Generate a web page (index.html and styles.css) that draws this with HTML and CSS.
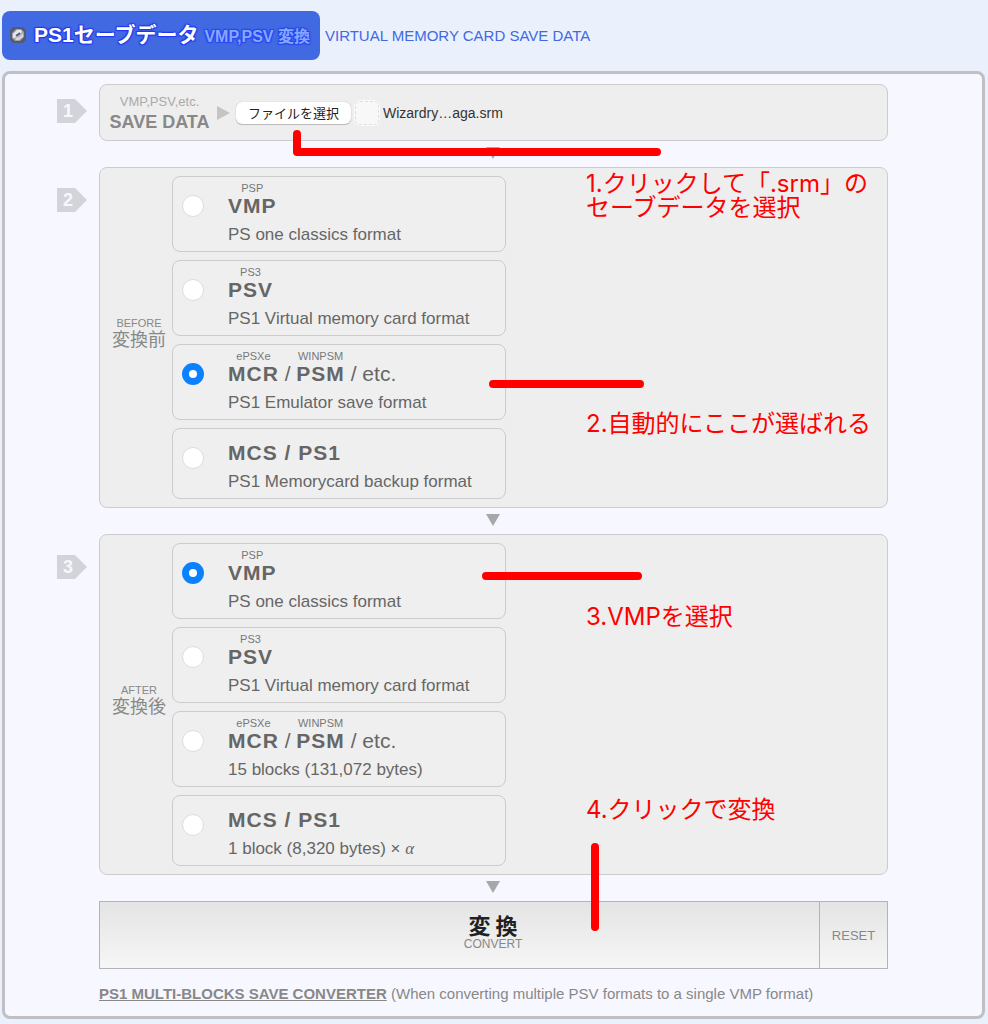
FILE: index.html
```html
<!DOCTYPE html>
<html lang="ja">
<head>
  <meta charset="utf-8">
  <title>PS1セーブデータ VMP,PSV 変換</title>
  <link rel="stylesheet" href="styles.css">
</head>
<body>
  <header>
    <h1>
      <svg class="logo" width="16" height="16" viewBox="0 0 16 16">
        <path d="M3 0h10l3 3v10l-3 3H3l-3-3V3z" fill="#555b6e"/>
        <path d="M6 2h5l3 3v5l-4 4H5l-3-3V6z" fill="#9ea2ae"/>
        <path d="M7 3h4l1 2-5 5-4 1V7z" fill="#e8e9ee"/>
        <path d="M13 6v4l-4 3H6l-1-2 4-1z" fill="#d4d6dd"/>
        <path d="M6 9l4-3" stroke="#555b6e" stroke-width="2"/>
      </svg>
      <span class="name">PS1セーブデータ</span>
      <span class="sub">VMP,PSV 変換</span>
    </h1>
    <p>VIRTUAL MEMORY CARD SAVE DATA</p>
  </header>

  <main>
    <form>
      <div class="step">
        <span class="badge">1</span>
        <div class="box file">
          <div class="file-label">
            <small>VMP,PSV,etc.</small>
            <b>SAVE DATA</b>
          </div>
          <span class="right"></span>
          <button type="button" class="choose">ファイルを選択</button>
          <span class="thumb"></span>
          <span class="filename">Wizardry…aga.srm</span>
        </div>
      </div>

      <div class="down"></div>

      <div class="step">
        <span class="badge">2</span>
        <div class="box group">
          <div class="side"><small>BEFORE</small>変換前</div>
          <div class="options">
            <label class="option">
              <input type="radio" name="before">
              <span class="text">
                <span class="title"><b><i>PSP</i>VMP</b></span>
                <span class="desc">PS one classics format</span>
              </span>
            </label>
            <label class="option">
              <input type="radio" name="before">
              <span class="text">
                <span class="title"><b><i>PS3</i>PSV</b></span>
                <span class="desc">PS1 Virtual memory card format</span>
              </span>
            </label>
            <label class="option">
              <input type="radio" name="before" checked>
              <span class="text">
                <span class="title"><b><i>ePSXe</i>MCR</b> / <b><i>WINPSM</i>PSM</b> / etc.</span>
                <span class="desc">PS1 Emulator save format</span>
              </span>
            </label>
            <label class="option short">
              <input type="radio" name="before">
              <span class="text">
                <span class="title"><b>MCS / PS1</b></span>
                <span class="desc">PS1 Memorycard backup format</span>
              </span>
            </label>
          </div>
        </div>
      </div>

      <div class="down"></div>

      <div class="step">
        <span class="badge">3</span>
        <div class="box group">
          <div class="side"><small>AFTER</small>変換後</div>
          <div class="options">
            <label class="option">
              <input type="radio" name="after" checked>
              <span class="text">
                <span class="title"><b><i>PSP</i>VMP</b></span>
                <span class="desc">PS one classics format</span>
              </span>
            </label>
            <label class="option">
              <input type="radio" name="after">
              <span class="text">
                <span class="title"><b><i>PS3</i>PSV</b></span>
                <span class="desc">PS1 Virtual memory card format</span>
              </span>
            </label>
            <label class="option">
              <input type="radio" name="after">
              <span class="text">
                <span class="title"><b><i>ePSXe</i>MCR</b> / <b><i>WINPSM</i>PSM</b> / etc.</span>
                <span class="desc">15 blocks (131,072 bytes)</span>
              </span>
            </label>
            <label class="option short">
              <input type="radio" name="after">
              <span class="text">
                <span class="title"><b>MCS / PS1</b></span>
                <span class="desc">1 block (8,320 bytes) × <em>α</em></span>
              </span>
            </label>
          </div>
        </div>
      </div>

      <div class="down"></div>

      <div class="buttons">
        <button type="submit" class="convert"><b>変 換</b><small>CONVERT</small></button>
        <button type="reset" class="reset">RESET</button>
      </div>
    </form>
    <p class="more"><a href="#">PS1 MULTI-BLOCKS SAVE CONVERTER</a> (When converting multiple PSV formats to a single VMP format)</p>

    <!-- how-to notes drawn over the form -->
    <svg class="marks" width="980" height="940">
      <path d="M292 60v18h360M488 310h147M481 502h152M590 773v80"/>
    </svg>
    <div class="note note1">1.クリックして「.srm」の<br>セーブデータを選択</div>
    <div class="note note2">2.自動的にここが選ばれる</div>
    <div class="note note3">3.VMPを選択</div>
    <div class="note note4">4.クリックで変換</div>
  </main>
</body>
</html>
```
FILE: styles.css
```css
* {
  box-sizing: border-box;
}
body {
  margin: 0;
  padding: 11px 3px 6px 2px;
  background: #eaf1fd;
  color: #666;
  font-family: "Liberation Sans", "Noto Sans CJK JP", sans-serif;
}
header {
  display: flex;
  align-items: center;
  gap: 5px;
  margin-bottom: 11px;
}
h1 {
  display: flex;
  align-items: center;
  height: 49px;
  margin: 0;
  padding: 0 10px 6px 8px;
  background: #4169e1;
  border-radius: 8px;
  color: #fff;
}
.logo {
  margin: 4px 8px 0 0;
}
h1 .name {
  font-size: 21px;
  margin-right: 6px;
  text-shadow: 1px 1px 1px #2038f0, -1px -1px 1px #2038f0, 1px -1px 1px #2038f0, -1px 1px 1px #2038f0;
}
h1 .sub {
  margin-top: 4px;
  font-size: 16px;
  color: #84a8ff;
  text-shadow: 1px 1px 1px #2a44f4, -1px -1px 1px #2a44f4, 1px -1px 1px #2a44f4, -1px 1px 1px #2a44f4;
}
header p {
  margin: 0;
  font-size: 15px;
  color: #4169e1;
}
main {
  position: relative;
  padding: 10px 94px 13px 52px;
  background: #f7f7ff;
  border: 3px solid #c0c0c4;
  border-radius: 8px;
}
.step {
  display: flex;
  align-items: flex-start;
}
.badge {
  flex: none;
  width: 30px;
  height: 24px;
  margin: 21px 12px 0 0;
  padding-left: 6px;
  background: #d3d4d9;
  clip-path: polygon(0 0, 60% 0, 100% 50%, 60% 100%, 0 100%);
  color: #f7f7ff;
  font: bold 18px/24px "Liberation Sans", sans-serif;
}
.box {
  flex: 1;
  display: flex;
  background: #eee;
  border: 1px solid #ccc;
  border-radius: 8px;
}
.file {
  align-items: center;
  height: 57px;
  padding-left: 8px;
}
.step:first-child .badge {
  margin-top: 15px;
}
.file-label {
  width: 103px;
  text-align: center;
  white-space: nowrap;
}
.file-label small {
  display: block;
  font-size: 13px;
  line-height: 18px;
  color: #aaa;
}
.file-label b {
  display: block;
  font-size: 18px;
  line-height: 22px;
  color: #888;
}
.right {
  margin: 0 6px;
  border: 7px solid transparent;
  border-left: 13px solid #c4c4c4;
  border-right: 0;
}
.choose {
  width: 115px;
  height: 22px;
  padding: 0;
  background: #fff;
  border: 0;
  border-radius: 6px;
  box-shadow: 0 0 1px rgba(0,0,0,0.3), 0 1px 1px rgba(0,0,0,0.2);
  color: #222;
  font: 13px/22px "Noto Sans CJK JP", sans-serif;
}
.thumb {
  width: 24px;
  height: 24px;
  margin: 0 4px;
  background: #f8f8f8;
  border: 1px dashed #ddd;
  border-radius: 5px;
  outline: 1px solid #fafafa;
}
.filename {
  font-size: 14px;
  color: #333;
}
.down {
  width: 14px;
  height: 26px;
  margin-left: 429px;
  padding-top: 6px;
}
.down::before {
  content: "";
  display: block;
  border: 7px solid transparent;
  border-top: 12px solid #a8a8a8;
  border-bottom: 0;
}
.group {
  padding: 8px 8px 8px 0;
}
.side {
  align-self: center;
  width: 72px;
  padding: 0 0 8px 6px;
  text-align: center;
  font-size: 18px;
  line-height: 20px;
  color: #888;
}
.side small {
  display: block;
  font-size: 11px;
  line-height: 13px;
}
.options {
  display: flex;
  flex-direction: column;
  gap: 8px;
  width: 334px;
}
.option {
  display: flex;
  height: 76px;
  padding: 18px 0 0 9px;
  background: #efefef;
  border: 1px solid #ccc;
  border-radius: 8px;
}
.option.short {
  height: 71px;
}
.option input {
  appearance: none;
  flex: none;
  width: 22px;
  height: 22px;
  margin: 0 24px 0 0;
  background: #fff;
  border: 1px solid #ddd;
  border-radius: 50%;
}
.option input:checked {
  background: #fff;
  border: 7px solid #0a82ff;
}
.text {
  margin-top: -1px;
}
.short .text {
  margin-top: -6px;
}
.title {
  display: block;
  font-size: 21px;
  line-height: 24px;
  margin-bottom: 5px;
}
.title b {
  position: relative;
  letter-spacing: 1px;
}
.title i {
  position: absolute;
  left: 50%;
  bottom: 100%;
  transform: translateX(-50%);
  font: 11px/12px "Liberation Sans", sans-serif;
  letter-spacing: 0;
  color: #777;
}
.desc {
  display: block;
  font-size: 17px;
  line-height: 24px;
}
.desc em {
  font-family: "Liberation Serif", serif;
}
.buttons {
  display: flex;
  height: 68px;
  margin-left: 42px;
}
.buttons button {
  padding: 0;
  background: linear-gradient(#e4e4e4, #f6f6f6);
  border: 1px solid #b4b4b8;
  color: #888;
  font: 13px "Liberation Sans", sans-serif;
}
.buttons .convert {
  flex: 1;
  padding: 0 0 8px 67px;
}
.convert b {
  display: block;
  color: #222;
  font: bold 22px/26px "Noto Sans CJK JP", sans-serif;
}
.convert small {
  display: block;
  font-size: 12px;
  line-height: 14px;
}
.buttons .reset {
  width: 68px;
  border-left: 0;
}
.more {
  margin: 16px 0 0 42px;
  font-size: 15px;
  line-height: 18px;
  color: #888;
}
.more a {
  color: #888;
  font-weight: bold;
}
.marks {
  position: absolute;
  left: 0;
  top: 0;
  fill: none;
  stroke: #f00;
  stroke-width: 8px;
  stroke-linecap: round;
  stroke-linejoin: round;
  pointer-events: none;
}
.note {
  position: absolute;
  left: 581px;
  color: #f00;
  font: 24px/24px Inter, "Noto Sans CJK JP", sans-serif;
  white-space: nowrap;
}
.note1 {
  top: 98px;
}
.note2 {
  top: 338px;
}
.note3 {
  top: 531px;
}
.note4 {
  top: 724px;
}
```
